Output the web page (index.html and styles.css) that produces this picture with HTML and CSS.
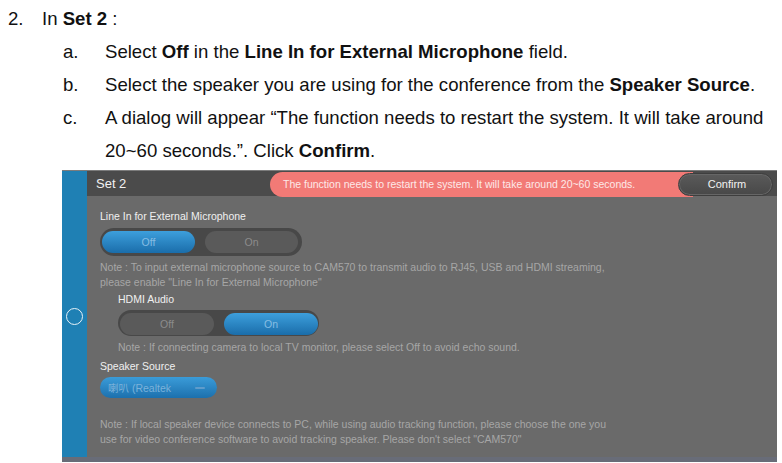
FILE: index.html
```html
<!DOCTYPE html>
<html lang="en">
<head>
    <meta charset="UTF-8">
    <title>Set 2 - Speaker Source</title>
    <link rel="stylesheet" href="styles.css">
</head>
<body>
    <div class="steps">
        <div class="step">
            <span class="num">2.</span>
            <span>In <b>Set 2</b> :</span>
        </div>
        <div class="sub">
            <span class="letter">a.</span>
            <span>Select <b>Off</b> in the <b>Line In for External Microphone</b> field.</span>
        </div>
        <div class="sub">
            <span class="letter">b.</span>
            <span>Select the speaker you are using for the conference from the <b>Speaker Source</b>.</span>
        </div>
        <div class="sub">
            <span class="letter">c.</span>
            <span>A dialog will appear “The function needs to restart the system. It will take around<br>20~60 seconds.”. Click <b>Confirm</b>.</span>
        </div>
    </div>

    <div class="shot">
        <div class="sidebar">
            <span class="ring"></span>
        </div>
        <div class="panel">
            <div class="header">
                <span class="title">Set 2</span>
                <div class="banner">The function needs to restart the system. It will take around 20~60 seconds.</div>
                <button class="confirm">Confirm</button>
            </div>
            <div class="content">
                <div class="label first">Line In for External Microphone</div>
                <div class="toggle">
                    <span class="opt on">Off</span>
                    <span class="opt">On</span>
                </div>
                <div class="note">Note : To input external microphone source to CAM570 to transmit audio to RJ45, USB and HDMI streaming,<br>please enable "Line In for External Microphone"</div>

                <div class="inner">
                    <div class="label hdmi">HDMI Audio</div>
                    <div class="toggle second">
                        <span class="opt">Off</span>
                        <span class="opt on">On</span>
                    </div>
                    <div class="note single">Note : If connecting camera to local TV monitor, please select Off to avoid echo sound.</div>
                </div>

                <div class="label speaker">Speaker Source</div>
                <div class="select">
                    <span>喇叭 (Realtek</span>
                    <span class="caret"></span>
                </div>
                <div class="note last">Note : If local speaker device connects to PC, while using audio tracking function, please choose the one you<br>use for video conference software to avoid tracking speaker. Please don't select "CAM570"</div>
            </div>
        </div>
    </div>
</body>
</html>
```

FILE: styles.css
```css
body {
    margin: 0;
    font-family: "Liberation Sans", Arial, "Noto Sans CJK SC", sans-serif;
    background: #fff;
    color: #111;
}

/* instruction text */
.steps {
    padding: 2px 0 0 8px;
    font-size: 18.6px;
    line-height: 33px;
    white-space: nowrap;
}

.step, .sub {
    display: flex;
}

.num {
    width: 34px;
}

.sub {
    padding-left: 55px;
}

.letter {
    width: 42px;
    flex-shrink: 0;
}

/* screenshot */
.shot {
    display: flex;
    margin: 3px 0 0 62px;
    width: 715px;
    height: 286px;
    border-top: 1px solid #7c7c7c;
    border-bottom: 5px solid #686c78;
    background: #6a6a6a;
}

.sidebar {
    width: 25px;
    background: #1f80b4;
    display: flex;
    align-items: center;
    justify-content: center;
}

.ring {
    width: 15px;
    height: 15px;
    border: 1.5px solid #e8f2f8;
    border-radius: 50%;
    margin: 4px 1px 0 0;
}

.panel {
    flex: 1;
    display: flex;
    flex-direction: column;
    font-size: 10.5px;
}

.header {
    display: flex;
    align-items: center;
    height: 25px;
    background: #4b4b4b;
    padding-left: 9px;
}

.title {
    color: #f2f2f2;
    font-size: 13px;
    width: 174px;
}

.banner {
    height: 25px;
    line-height: 25px;
    margin-top: 2px;
    padding-left: 13px;
    width: 410px;
    background: #f27a76;
    color: #fde9e8;
    font-size: 10.5px;
    border-radius: 13px 0 0 13px;
}

.confirm {
    margin-left: -15px;
    width: 95px;
    height: 23px;
    border: 1px solid #3e3e3e;
    border-radius: 12px;
    background: linear-gradient(#5a5a5a, #484848);
    color: #f2f2f2;
    font-family: inherit;
    font-size: 11px;
    padding: 0 0 2px 3px;
    margin-top: 2px;
    box-shadow: inset 0 0 0 1px #666;
}

.content {
    padding-left: 13px;
}

.label {
    color: #f0f0f0;
    font-size: 10.5px;
    line-height: 14px;
}

.label.first {
    margin-top: 13px;
}

.toggle {
    display: flex;
    gap: 10px;
    width: 196px;
    height: 22px;
    padding: 3px 4px 3px 2px;
    margin-top: 5px;
    background: #484848;
    border-radius: 14px;
}

.opt {
    flex: 1;
    border-radius: 11px;
    background: #5a5a5a;
    color: #8c8c8c;
    font-size: 10.5px;
    text-align: center;
    line-height: 22px;
}

.opt.on {
    background: linear-gradient(#3d9fdc, #1a6daa);
    color: #86bde3;
}

.note {
    color: #a6a6a6;
    line-height: 15px;
    margin-top: 4px;
}

.inner {
    padding-left: 18px;
}

.label.hdmi {
    margin-top: 2px;
}

.toggle.second {
    margin-top: 4px;
    padding: 3px 1px 1px 2px;
    width: 198px;
}

.note.single {
    margin-top: 4px;
}

.label.speaker {
    margin-top: 4px;
}

.select {
    display: flex;
    align-items: center;
    justify-content: space-between;
    width: 103px;
    height: 21px;
    margin-top: 4px;
    padding: 0 6px 0 8px;
    border-radius: 11px;
    background: linear-gradient(#3b9cd9, #1c70ad);
    color: #7bb2da;
    font-size: 10.5px;
}

.caret {
    width: 10px;
    height: 2px;
    margin-right: 6px;
    background: #5f9ccb;
    border-radius: 1px;
}

.note.last {
    margin-top: 19px;
}
```
